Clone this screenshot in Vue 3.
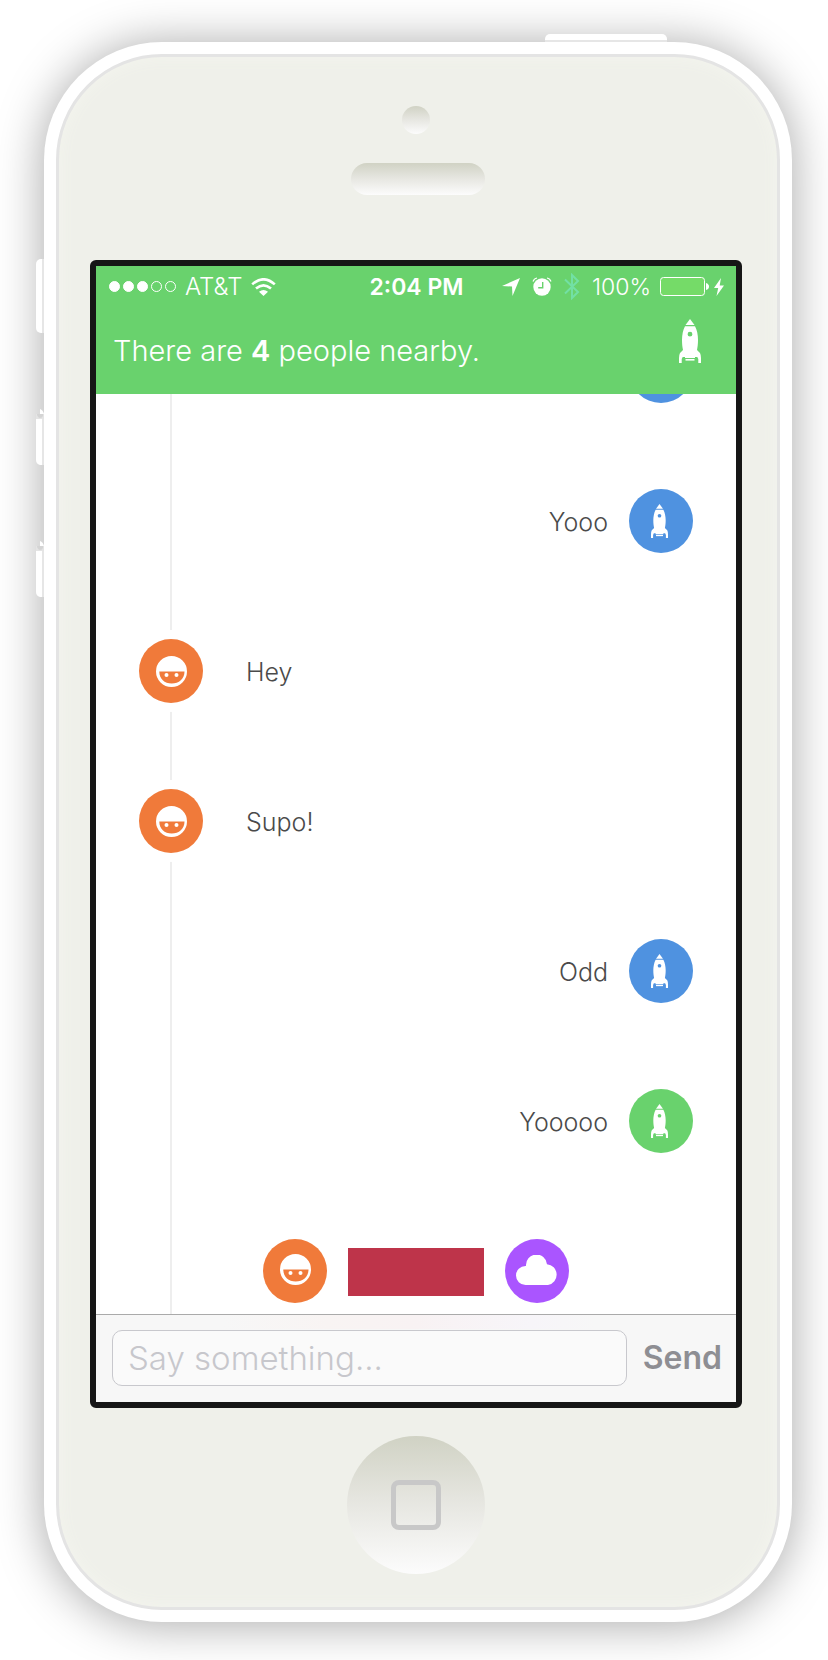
<script setup>
import { ref } from 'vue'

const draft = ref('')
const messages = [
  { id: 1, side: 'right', tone: 'blue', icon: 'rocket', text: '' },
  { id: 2, side: 'right', tone: 'blue', icon: 'rocket', text: 'Yooo' },
  { id: 3, side: 'left', tone: 'orange', icon: 'face', text: 'Hey' },
  { id: 4, side: 'left', tone: 'orange', icon: 'face', text: 'Supo!' },
  { id: 5, side: 'right', tone: 'blue', icon: 'rocket', text: 'Odd' },
  { id: 6, side: 'right', tone: 'green', icon: 'rocket', text: 'Yooooo' },
]
</script>

<template>
  <svg class="defs" aria-hidden="true">
    <symbol id="rocket" viewBox="0 0 22 44">
      <path fill="currentColor" d="M11 0 L15.500 6 H6.500 Z" />
      <path fill="currentColor" fill-rule="evenodd" d="M6 7.300 H16 C18 11 19 16 19 21 C19 25 18.600 28 18 31 L21 34 Q22 36 22 39 V44 H19.300 V40 L18.300 38 H16 V39 H6 V38 H3.700 L2.700 40 V44 H0 V39 Q0 36 1 34 L4 31 C3.400 28 3 25 3 21 C3 16 4 11 6 7.300 Z M11 12.800 A2.400 2.400 0 1 0 11 17.600 A2.400 2.400 0 1 0 11 12.800 Z" />
      <path fill="currentColor" d="M6.500 40 H15.500 V41.600 H6.500 Z" />
    </symbol>
    <symbol id="face" viewBox="0 0 31 31">
      <path fill="currentColor" fill-rule="evenodd" d="M15.500 0 A15.500 15.500 0 1 0 15.500 31 A15.500 15.500 0 1 0 15.500 0 Z M3.300 15.500 H28.500 C28.500 23 23 27.500 15.700 27.500 C8.500 27.500 3.300 23 3.300 15.500 Z" />
      <circle cx="10.500" cy="19" r="2" fill="currentColor" />
      <circle cx="20.500" cy="19" r="2" fill="currentColor" />
    </symbol>
    <symbol id="cloud" viewBox="0 0 42 30">
      <path fill="currentColor" d="M9.500 30 A9.500 9.500 0 0 1 9.500 11 H10 A10.500 10.500 0 0 1 31 9.200 A10.500 10.500 0 0 1 32 30 Z" />
    </symbol>
    <symbol id="volume" viewBox="0 0 8 56">
      <path fill="#e4e4e4" d="M0 5 H8 V10 H0 Z" />
      <path fill="#d4d4d4" d="M1 5 H7 V7 Q6 9 4 9 Q1 8 1 5 Z" />
      <path fill="#fff" d="M4 0 Q7 1 8 5 H4 Z M0 10 H6 V56 H4 Q0 55 0 51 Z" />
      <path fill="#e6e6e6" d="M6 10 H8 V56 H6 Z" />
    </symbol>
  </svg>

  <div class="phone">
    <span class="key power"></span>
    <span class="key mute"></span>
    <svg class="volume up" aria-hidden="true"><use href="#volume" /></svg>
    <svg class="volume down" aria-hidden="true"><use href="#volume" /></svg>

    <div class="front">
      <span class="camera"></span>
      <span class="speaker"></span>

      <main class="screen">
        <header class="top">
          <div class="status">
            <div class="group">
              <span class="dots"><i></i><i></i><i></i><i class="off"></i><i class="off"></i></span>
              <span class="carrier">AT&amp;T</span>
              <svg class="wifi" viewBox="0 0 25 18" aria-hidden="true">
                <g fill="none" stroke="#fff" stroke-width="2.6">
                  <path d="M1.200 6.400 Q12.500 -3.800 23.800 6.400" />
                  <path d="M5 10.600 Q12.500 4 20 10.600" />
                </g>
                <path fill="#fff" d="M8 13.700 Q12.500 10.300 17 13.700 L12.500 18 Z" />
              </svg>
            </div>
            <time class="clock">2:04 PM</time>
            <div class="group end">
              <span class="icons">
                <svg class="arrow" viewBox="0 0 18 18" aria-hidden="true"><path fill="#fff" d="M18 0 L10.500 18 L10 8.500 L0 8 Z" /></svg>
                <svg class="alarm" viewBox="0 0 20 19" aria-hidden="true">
                  <circle cx="10" cy="10" r="8.700" fill="#fff" />
                  <path d="M10.700 5 V10.800 H6.200" fill="none" stroke="#69d26d" stroke-width="1.400" />
                  <path d="M1 4.500 Q2 1.500 5 1 M15 1 Q18 1.500 19 4.500" fill="none" stroke="#fff" stroke-width="1.200" />
                </svg>
                <svg class="bluetooth" viewBox="0 0 16 27" aria-hidden="true"><path d="M1 6.500 L14 19 L8 25 V2 L14 8 L1 20.500" fill="none" stroke="#72e0a4" stroke-width="2" /></svg>
                <span>100%</span>
              </span>
              <svg class="battery" viewBox="0 0 49 19" aria-hidden="true">
                <rect x="0.500" y="0.500" width="44" height="18" rx="3" fill="#75db68" stroke="#fff" />
                <path d="M46 6 Q49 7 49 9.500 Q49 12 46 13 Z" fill="#fff" />
              </svg>
              <svg class="bolt" viewBox="0 0 10 18" aria-hidden="true"><path fill="#fff" d="M7 0 L0 10 H4.200 L2.500 18 L10 7.500 H5.700 Z" /></svg>
            </div>
          </div>
          <div class="bar">
            <h1>There are <b>4</b> people nearby.</h1>
            <button class="me" type="button" aria-label="Profile"><svg aria-hidden="true"><use href="#rocket" /></svg></button>
          </div>
        </header>

        <section class="chat">
          <div v-for="m in messages" :key="m.id" class="row" :class="m.side">
            <span class="avatar" :class="m.tone"><svg :class="m.icon + '-icon'" aria-hidden="true"><use :href="'#' + m.icon" /></svg></span>
            <p>{{ m.text }}</p>
          </div>
          <div class="pair">
            <span class="avatar orange"><svg class="face-icon" aria-hidden="true"><use href="#face" /></svg></span>
            <span class="block"></span>
            <span class="avatar purple"><svg class="cloud-icon" aria-hidden="true"><use href="#cloud" /></svg></span>
          </div>
        </section>

        <form class="composer" @submit.prevent="draft = ''">
          <input v-model="draft" type="text" placeholder="Say something..." aria-label="Message" />
          <button type="submit">Send</button>
        </form>
      </main>

      <button class="home" type="button" aria-label="Home"><span></span></button>
    </div>
  </div>
</template>

<style>
body {
  background: #fff;
}
</style>

<style scoped>
* {
  box-sizing: border-box;
}
.defs {
  position: absolute;
  width: 0;
  height: 0;
}
svg {
  display: block;
  flex: none;
}
button {
  border: 0;
  padding: 0;
  background: none;
  font: inherit;
}
.phone {
  position: relative;
  margin: 42px 36px 38px 44px;
  padding: 12px;
  border-radius: 118px;
  background: #fff;
  box-shadow: 0 2px 48px rgba(0, 0, 0, 0.35);
  font-family: Inter, "Liberation Sans", sans-serif;
  font-weight: 300;
}
.key {
  position: absolute;
  background: #fff;
}
.power {
  top: -8px;
  right: 125px;
  width: 122px;
  height: 8px;
  border-bottom: 2px solid #e6e6e6;
  border-radius: 5px 5px 0 0;
}
.mute {
  top: 217px;
  left: -8px;
  width: 8px;
  height: 74px;
  border-right: 2px solid #e6e6e6;
  border-radius: 5px 0 0 5px;
}
.volume {
  position: absolute;
  left: -8px;
  width: 8px;
  height: 56px;
}
.up {
  top: 367px;
}
.down {
  top: 499px;
}
.front {
  display: flex;
  flex-direction: column;
  align-items: center;
  padding: 49px 35px 33px 31px;
  border: 3px solid #e4e4e4;
  border-radius: 106px;
  background: #eff0ea;
  box-shadow: inset 0 0 16px #f4f5ee;
}
.camera,
.speaker,
.home {
  background: linear-gradient(#d0d2c4, #e5e5df 45%, #fcfcfc);
}
.camera {
  width: 28px;
  height: 28px;
  border-radius: 50%;
}
.speaker {
  width: 134px;
  height: 32px;
  margin: 29px 0 65px 4px;
  border-radius: 16px;
}
.screen {
  align-self: stretch;
  border: 6px solid #161616;
  border-radius: 6px;
  background: #fff;
}
.top {
  height: 128px;
  background: #69d26d;
  color: #fff;
}
.status {
  display: grid;
  grid-template-columns: 1fr auto 1fr;
  align-items: center;
  height: 41px;
  padding: 0 12px 0 13px;
  font-size: 23px;
}
.group {
  display: flex;
  align-items: center;
  gap: 9px;
}
.end {
  justify-content: flex-end;
}
.icons {
  display: flex;
  align-items: center;
  gap: 12px;
}
.dots {
  display: flex;
  gap: 3px;
}
.dots i {
  width: 11px;
  height: 11px;
  border: 1px solid #fff;
  border-radius: 50%;
  background: #fff;
}
.dots .off {
  background: none;
}
.carrier {
  font-size: 24px;
}
.wifi {
  width: 25px;
  height: 18px;
}
.clock {
  font-weight: 600;
}
.arrow {
  width: 18px;
  height: 18px;
}
.alarm {
  width: 20px;
  height: 19px;
}
.bluetooth {
  width: 16px;
  height: 27px;
}
.battery {
  width: 49px;
  height: 19px;
}
.bolt {
  width: 10px;
  height: 18px;
  margin-left: -4px;
}
.bar {
  display: flex;
  align-items: flex-start;
  justify-content: space-between;
  padding: 12px 35px 0 17px;
}
h1 {
  margin: 14px 0 0;
  font-size: 29px;
  font-weight: 300;
  line-height: 36px;
}
h1 b {
  font-weight: 600;
}
.me {
  color: #fff;
}
.me svg {
  width: 22px;
  height: 44px;
}
.chat {
  overflow: hidden;
  background: linear-gradient(#eee, #eee) 74px 0 / 2px 100% no-repeat;
}
.row {
  display: flex;
  align-items: center;
  height: 150px;
  padding: 0 43px;
}
.row:first-child {
  margin-top: -98px;
}
.row p {
  margin: 2px 43px 0;
  color: #4a4a4a;
  font-size: 25px;
  line-height: 30px;
}
.right {
  flex-direction: row-reverse;
}
.right p {
  margin: 2px 21px 0;
}
.left .avatar {
  box-shadow: 0 0 0 9px #fff;
}
.avatar {
  display: flex;
  flex: none;
  align-items: center;
  justify-content: center;
  width: 64px;
  height: 64px;
  border-radius: 50%;
  color: #fff;
}
.blue {
  background: #4f92e0;
}
.orange {
  background: #f07a3a;
}
.green {
  background: #69d26d;
}
.purple {
  background: #aa55ff;
}
.rocket-icon {
  width: 17px;
  height: 34px;
  margin-right: 3px;
}
.face-icon {
  width: 31px;
  height: 31px;
}
.cloud-icon {
  width: 42px;
  height: 30px;
}
.pair {
  display: flex;
  align-items: center;
  justify-content: center;
  gap: 21px;
  height: 118px;
  padding: 43px 0 11px;
}
.pair svg {
  margin-bottom: 3px;
}
.block {
  width: 136px;
  height: 48px;
  margin-top: 2px;
  background: #be344a;
}
.composer {
  display: flex;
  align-items: center;
  gap: 16px;
  height: 88px;
  padding: 0 14px 2px 16px;
  border-top: 1px solid #aaa;
  background: linear-gradient(90deg, #f7f7f7 20%, #f8f4f3 36%, #f8f2f3 50%, #f7f5f9 68%, #f7f7f7 78%) 0 0 / 100% 14px no-repeat #f7f7f7;
  font-size: 33px;
}
.composer input {
  flex: 1;
  min-width: 0;
  height: 56px;
  padding: 0 15px;
  border: 1px solid #c8c8cd;
  border-radius: 10px;
  background: #fafafa;
  color: #4a4a4a;
  font: inherit;
}
.composer input::placeholder {
  color: #c7c7cc;
  opacity: 1;
}
.composer button {
  color: #8e8e93;
  font-size: 32px;
  font-weight: 600;
}
.home {
  display: flex;
  align-items: center;
  justify-content: center;
  width: 138px;
  height: 138px;
  margin-top: 28px;
  border-radius: 50%;
}
.home span {
  width: 50px;
  height: 50px;
  border: 5px solid #c8c8c8;
  border-radius: 8px;
}
</style>
